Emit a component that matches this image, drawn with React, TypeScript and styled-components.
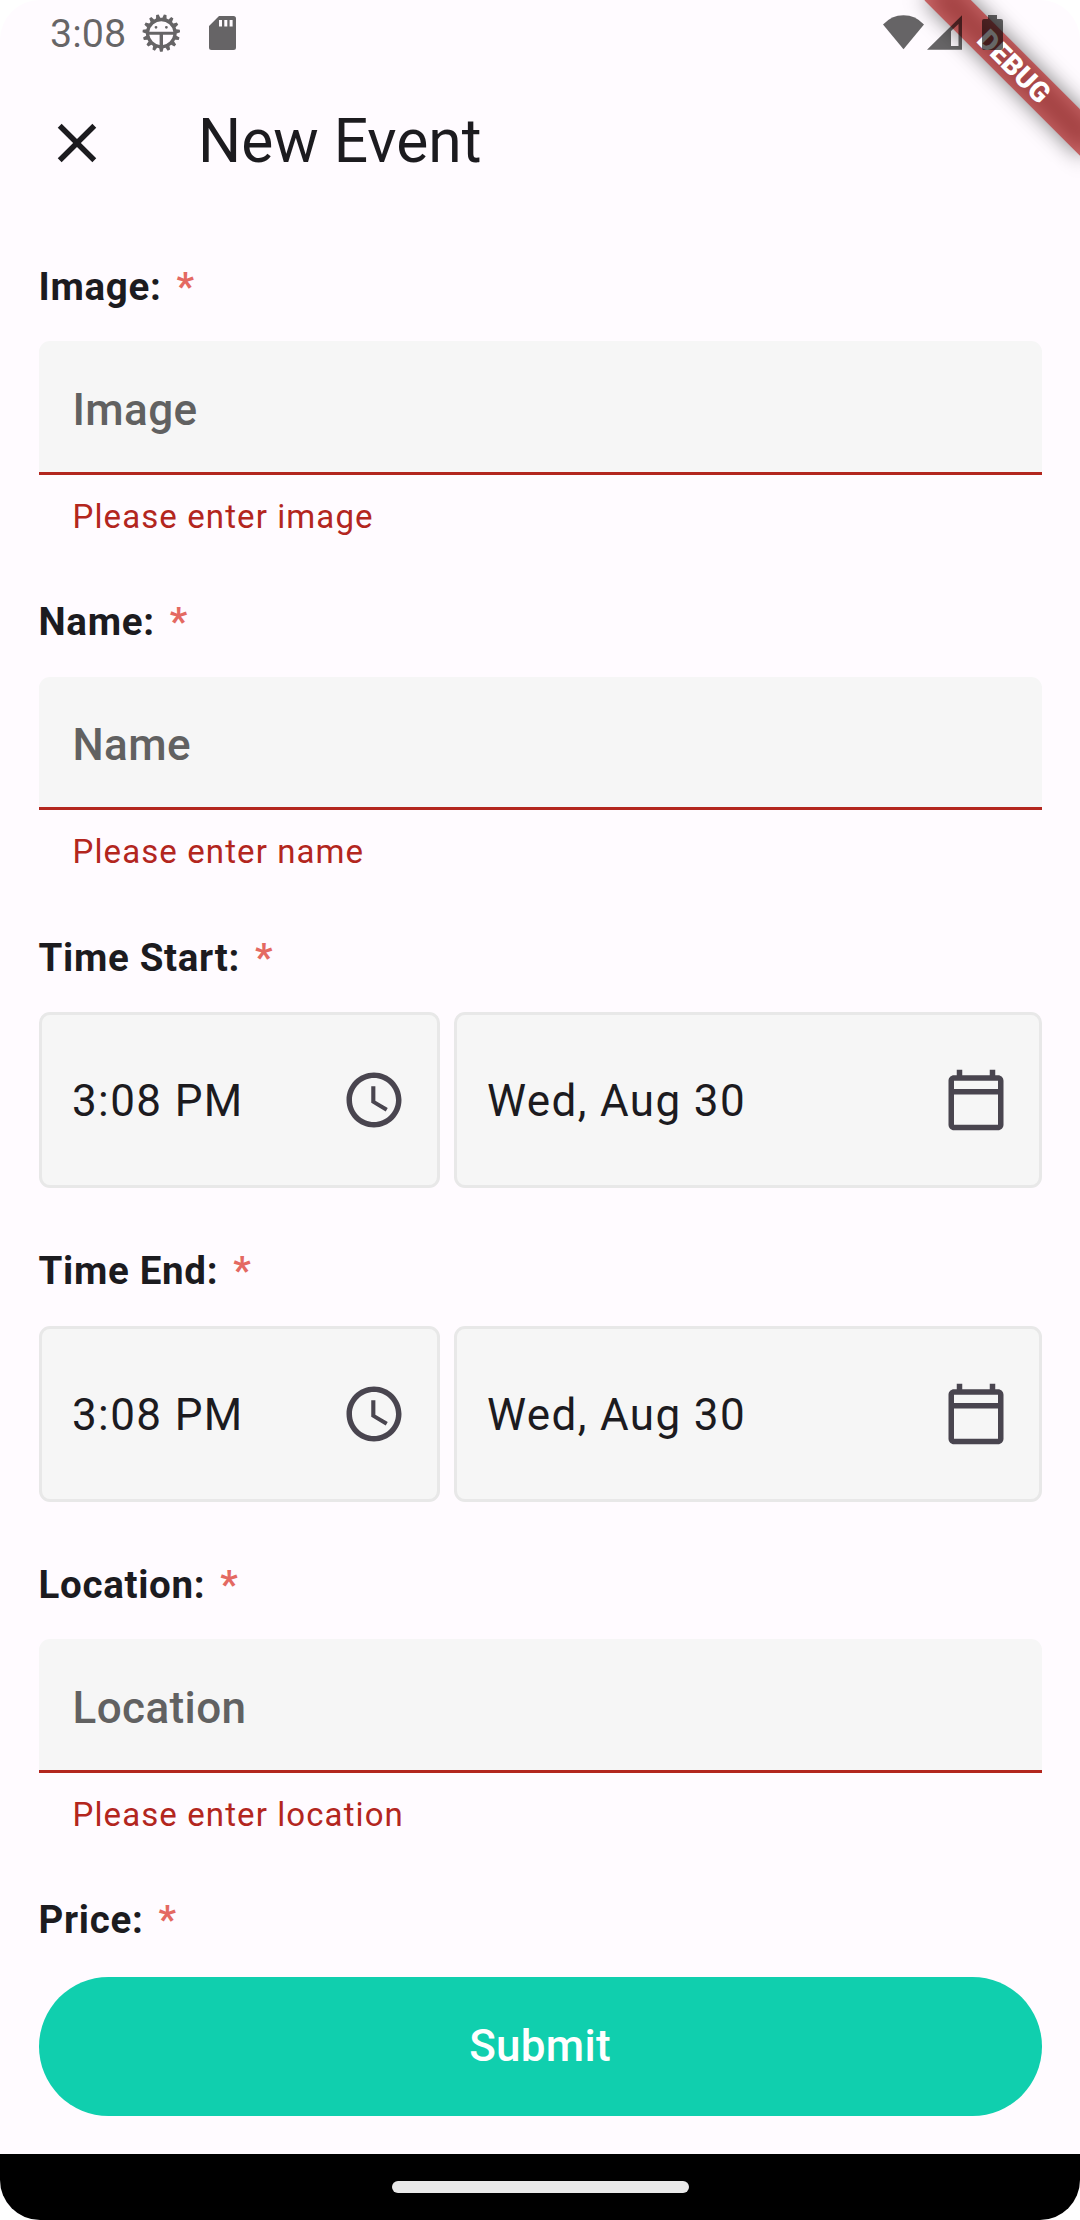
import React from "react";
import styled, { createGlobalStyle } from "styled-components";

const GlobalStyle = createGlobalStyle`
  * { box-sizing: border-box; }
  html, body { margin: 0; padding: 0; background: #fff; }
`;

const Screen = styled.div`
  position: relative;
  width: 1080px;
  height: 2220px;
  display: flex;
  flex-direction: column;
  overflow: hidden;
  border-radius: 40px;
  background: #fffbff;
  color: #1c1b1f;
  font-family: Roboto, "Liberation Sans", sans-serif;
`;

const StatusBar = styled.div`
  position: relative;
  z-index: 2;
  height: 66px;
  flex: none;
  display: flex;
  justify-content: space-between;
  padding: 0 77px 0 50px;
  color: rgba(0, 0, 0, 0.6);
`;

const StatusGroup = styled.div`
  display: flex;
  align-items: flex-start;
`;

const Clock = styled.span`
  font-size: 39.5px;
  line-height: 46px;
  padding-top: 11px;
  width: 91px;
`;

const StatusIcon = styled.svg<{ $w: number; $gap?: number }>`
  display: block;
  flex: none;
  width: ${(p) => p.$w}px;
  height: 66px;
  margin-left: ${(p) => p.$gap ?? 0}px;
`;

const Banner = styled.div`
  position: absolute;
  z-index: 1;
  left: 904px;
  top: 49.5px;
  width: 220px;
  height: 33px;
  transform: rotate(45deg);
`;

const BannerShadow = styled.div`
  position: absolute;
  inset: 0;
  background: rgba(0, 0, 0, 0.5);
  filter: blur(10.9px);
`;

const BannerLabel = styled.div`
  position: absolute;
  inset: 0;
  background: rgba(183, 28, 28, 0.627);
  color: #fff;
  font-size: 28px;
  font-weight: 900;
  line-height: 33px;
  text-align: center;
`;

const AppBar = styled.header`
  height: 154px;
  flex: none;
  display: flex;
  align-items: center;
  padding-left: 44px;
`;

const CloseButton = styled.button`
  width: 66px;
  height: 66px;
  padding: 0;
  border: 0;
  background: none;
  color: inherit;
`;

const Title = styled.h1`
  margin: 0 0 0 88px;
  font-size: 60.5px;
  line-height: 77px;
  font-weight: 400;
  padding-bottom: 4px;
`;

const Form = styled.main`
  flex: 1;
  min-height: 0;
  overflow: hidden;
  display: flex;
  flex-direction: column;
  padding: 38.5px 38.5px 0;
`;

const Section = styled.section<{ $height: number }>`
  flex: none;
  height: ${(p) => p.$height}px;
  display: flex;
  flex-direction: column;
`;

const Label = styled.div`
  flex: none;
  height: 55px;
  margin-bottom: 27.5px;
  font-size: 38.5px;
  line-height: 55px;
  font-weight: 700;
  letter-spacing: 0.6875px;
  white-space: pre;
`;

const Star = styled.span`
  color: #e46962;
  margin-left: 15px;
`;

const TextField = styled.div`
  flex: none;
  height: 133.5px;
  padding: 35.5px 33px 0 34px;
  border-bottom: 3px solid #b3261e;
  border-radius: 11px 11px 0 0;
  background: #f6f6f6;
  color: #616161;
  font-size: 44px;
  line-height: 66px;
  font-weight: 500;
  letter-spacing: 0.4px;
`;

const ErrorText = styled.div`
  padding: 20px 33px 0 34px;
  color: #b3261e;
  font-size: 33px;
  line-height: 44px;
  letter-spacing: 1.1px;
`;

const PickerRow = styled.div`
  display: grid;
  grid-template-columns: 401px 1fr;
  column-gap: 14px;
`;

const Picker = styled.div`
  height: 176px;
  display: flex;
  align-items: center;
  justify-content: space-between;
  padding: 0 30px 0 30.5px;
  border: 3px solid #e8e8e8;
  border-radius: 11px;
  background: #f6f6f6;
  font-size: 44px;
  line-height: 66px;
  letter-spacing: 1.375px;
`;

const PickerValue = styled.span`
  padding-top: 2px;
`;

const Glyph = styled.svg`
  display: block;
  flex: none;
  width: 66px;
  height: 66px;
  fill: currentColor;
`;

const PickerGlyph = styled(Glyph)`
  color: #49454f;
`;

const Footer = styled.footer`
  flex: none;
  height: 177px;
  padding: 0 38.5px;
`;

const Submit = styled.button`
  display: block;
  width: 100%;
  height: 138.6px;
  border: 0;
  border-radius: 70px;
  background: #10cfae;
  color: #fff;
  font-family: inherit;
  font-size: 44px;
  font-weight: 500;
  letter-spacing: 0.275px;
`;

const NavBar = styled.nav`
  flex: none;
  height: 66px;
  display: flex;
  justify-content: center;
  padding-top: 27px;
  background: #000;
`;

const Handle = styled.div`
  width: 297px;
  height: 12px;
  border-radius: 6px;
  background: #e9e9e9;
`;

const TEETH = 15;

// Toothed outline: each tooth is a short trapezoid standing on the rim.
const gearOutline = Array.from({ length: TEETH }, (_, i) => {
  const centre = Math.PI / 2 + (i / TEETH) * Math.PI * 2;
  return [
    [15.4, -0.14],
    [18.8, -0.07],
    [18.8, 0.07],
    [15.4, 0.14],
  ]
    .map(([r, offset], j) => {
      const a = centre + offset;
      const x = (161.3 + r * Math.cos(a)).toFixed(2);
      const y = (33 + r * Math.sin(a)).toFixed(2);
      return `${i || j ? "L" : "M"}${x} ${y}`;
    })
    .join("");
}).join("");

const gearHoles =
  "ZM149.3 31.7A12.1 12.1 0 0 1 173.3 31.7ZM149.3 34.8H159.6V45A12.1 12.1 0 0 1 149.3 34.8ZM173.3 34.8H163V45A12.1 12.1 0 0 0 173.3 34.8Z" +
  "M157.4 27.3a1.4 1.4 0 1 0 -2.8 0a1.4 1.4 0 1 0 2.8 0ZM167.8 27.3a1.4 1.4 0 1 0 -2.8 0a1.4 1.4 0 1 0 2.8 0Z";

const GearIcon = () => (
  <StatusIcon $w={40} viewBox="141 0 40 66" fill="currentColor">
    <path fillRule="evenodd" strokeWidth="0.6" strokeLinejoin="round" d={gearOutline + gearHoles} />
  </StatusIcon>
);

const SdIcon = () => (
  <StatusIcon $w={27} $gap={28} viewBox="209 0 27 66" fill="currentColor">
    <path
      fillRule="evenodd"
      d="M219 16H233.5a2.5 2.5 0 0 1 2.5 2.5V47.5a2.5 2.5 0 0 1 -2.5 2.5H211.5a2.5 2.5 0 0 1 -2.5 -2.5V26ZM219 20V26.6h3V20ZM224.3 20V26.6h3V20ZM229.6 20V26.6h3V20Z"
    />
  </StatusIcon>
);

const WifiIcon = () => (
  <StatusIcon $w={41} viewBox="883 0 41 66" fill="currentColor">
    <path d="M903.5 49.3L883 24.5Q891.5 15.2 903.5 15.2T924 24.5Z" />
  </StatusIcon>
);

const SignalIcon = () => (
  <StatusIcon $w={35} $gap={3} viewBox="927 0 35 66" fill="currentColor">
    <path fillRule="evenodd" d="M927 49.8L962 15.3V49.8ZM951 31V46H958.5V24Z" />
  </StatusIcon>
);

const BatteryIcon = () => (
  <StatusIcon $w={21} $gap={20} viewBox="982 0 21 66" fill="currentColor">
    <path d="M988 15H997V19H1001a2 2 0 0 1 2 2V48a2 2 0 0 1 -2 2H984a2 2 0 0 1 -2 -2V21a2 2 0 0 1 2 -2H988Z" />
  </StatusIcon>
);

const FieldLabel = ({ children }: { children: string }) => (
  <Label>
    {children}:<Star>*</Star>
  </Label>
);

const TextSection = ({ name }: { name: string }) => (
  <Section $height={335.5}>
    <FieldLabel>{name}</FieldLabel>
    <TextField>{name}</TextField>
    <ErrorText>Please enter {name.toLowerCase()}</ErrorText>
  </Section>
);

const TimeSection = ({ name }: { name: string }) => (
  <Section $height={313.5}>
    <FieldLabel>{name}</FieldLabel>
    <PickerRow>
      <Picker>
        <PickerValue>3:08 PM</PickerValue>
        <PickerGlyph viewBox="0 0 24 24">
          <path d="M11.99 2C6.47 2 2 6.48 2 12s4.47 10 9.99 10C17.52 22 22 17.52 22 12S17.52 2 11.99 2zM12 20c-4.42 0-8-3.58-8-8s3.58-8 8-8 8 3.58 8 8-3.58 8-8 8zm.5-13H11v6l5.25 3.15.75-1.23-4.5-2.67z" />
        </PickerGlyph>
      </Picker>
      <Picker>
        <PickerValue>Wed, Aug 30</PickerValue>
        <PickerGlyph viewBox="0 0 24 24">
          <path d="M20 3h-1V1h-2v2H7V1H5v2H4c-1.1 0-2 .9-2 2v16c0 1.1.9 2 2 2h16c1.1 0 2-.9 2-2V5c0-1.1-.9-2-2-2zm0 18H4V10h16v11zm0-13H4V5h16v3z" />
        </PickerGlyph>
      </Picker>
    </PickerRow>
  </Section>
);

export default function App() {
  return (
    <>
      <GlobalStyle />
      <Screen>
        <StatusBar>
          <StatusGroup>
            <Clock>3:08</Clock>
            <GearIcon />
            <SdIcon />
          </StatusGroup>
          <StatusGroup>
            <WifiIcon />
            <SignalIcon />
            <BatteryIcon />
          </StatusGroup>
        </StatusBar>
        <Banner>
          <BannerShadow />
          <BannerLabel>DEBUG</BannerLabel>
        </Banner>
        <AppBar>
          <CloseButton aria-label="Close">
            <Glyph viewBox="0 0 24 24">
              <path d="M19 6.41L17.59 5 12 10.59 6.41 5 5 6.41 10.59 12 5 17.59 6.41 19 12 13.41 17.59 19 19 17.59 13.41 12z" />
            </Glyph>
          </CloseButton>
          <Title>New Event</Title>
        </AppBar>
        <Form>
          <TextSection name="Image" />
          <TextSection name="Name" />
          <TimeSection name="Time Start" />
          <TimeSection name="Time End" />
          <TextSection name="Location" />
          <FieldLabel>Price</FieldLabel>
        </Form>
        <Footer>
          <Submit>Submit</Submit>
        </Footer>
        <NavBar>
          <Handle />
        </NavBar>
      </Screen>
    </>
  );
}
